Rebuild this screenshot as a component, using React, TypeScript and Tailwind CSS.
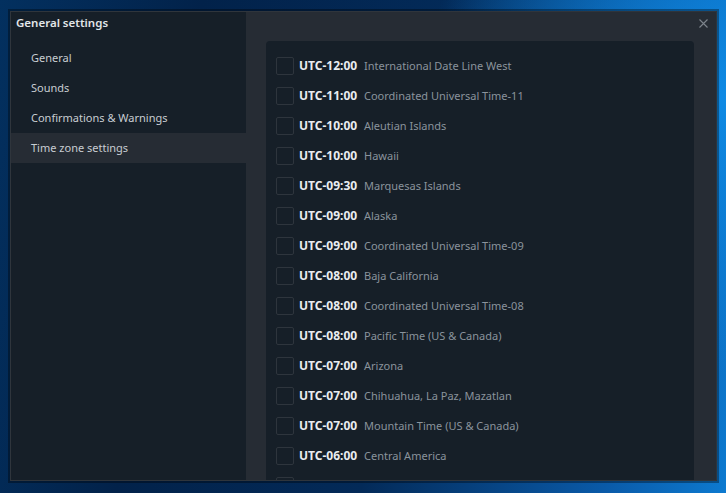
const menu = ['General', 'Sounds', 'Confirmations & Warnings', 'Time zone settings'];

const zones = [
    ['UTC-12:00', 'International Date Line West'],
    ['UTC-11:00', 'Coordinated Universal Time-11'],
    ['UTC-10:00', 'Aleutian Islands'],
    ['UTC-10:00', 'Hawaii'],
    ['UTC-09:30', 'Marquesas Islands'],
    ['UTC-09:00', 'Alaska'],
    ['UTC-09:00', 'Coordinated Universal Time-09'],
    ['UTC-08:00', 'Baja California'],
    ['UTC-08:00', 'Coordinated Universal Time-08'],
    ['UTC-08:00', 'Pacific Time (US & Canada)'],
    ['UTC-07:00', 'Arizona'],
    ['UTC-07:00', 'Chihuahua, La Paz, Mazatlan'],
    ['UTC-07:00', 'Mountain Time (US & Canada)'],
    ['UTC-06:00', 'Central America'],
];

export default function App() {
    return (
        <div
            className="w-[726px] h-[493px] overflow-hidden pt-[11px] pl-[10px] font-['Noto_Sans',sans-serif] text-[11px]"
            style={{
                background:
                    'radial-gradient(ellipse 60% 80% at 100% 20%, #0f8ae4 0%, rgba(15,138,228,0) 70%), linear-gradient(100deg, #03305f 0%, #02224a 25%, #032a58 55%, #0a5aa8 85%, #0d7ad0 100%)',
            }}
        >
            {/* Dialog window */}
            <div className="w-[707px] h-[470px] flex border border-[#2f353c] shadow-[0_0_0_2px_rgba(0,0,0,0.35)]">
                {/* Sidebar */}
                <div className="w-[235px] shrink-0 bg-[#161f28] flex flex-col">
                    <div className="h-[21px] pl-[5px] flex items-center text-[11.5px] font-semibold text-[#e2e6e9]">General settings</div>
                    <div className="mt-[10px]">
                        {menu.map((item, i) => (
                            <div
                                key={item}
                                className={
                                    'h-[30px] pl-[20px] flex items-center text-[#c8cdd2] ' +
                                    (i === 3 ? 'bg-[#262c34]' : '')
                                }
                            >
                                {item}
                            </div>
                        ))}
                    </div>
                </div>

                {/* Content */}
                <div className="flex-1 bg-[#262c34] relative pt-[29px] pl-[20px] pr-[22px] overflow-hidden">
                    <svg className="absolute top-[7px] right-[8px] w-[9px] h-[9px]" viewBox="0 0 9 9" fill="none">
                        <path d="M0.5 0.5L8.5 8.5M8.5 0.5L0.5 8.5" stroke="#7d848c" strokeWidth="1.1" />
                    </svg>
                    <div className="bg-[#161f28] rounded-[4px] pt-[10px] pl-[10px] h-[600px]">
                        {zones.map(([utc, name], i) => (
                            <div key={i} className="h-[30px] flex items-center">
                                <div className="w-[18px] h-[18px] border border-[#2e353d] rounded-[2px] shrink-0" />
                                <span className="ml-[5px] w-[65px] text-[12px] font-bold text-[#e9edf0]">{utc}</span>
                                <span className="text-[#8a939c]">{name}</span>
                            </div>
                        ))}
                        <div className="h-[30px] flex items-center">
                            <div className="w-[18px] h-[18px] border border-[#2e353d] rounded-[2px] shrink-0" />
                        </div>
                    </div>
                </div>
            </div>
        </div>
    );
}
